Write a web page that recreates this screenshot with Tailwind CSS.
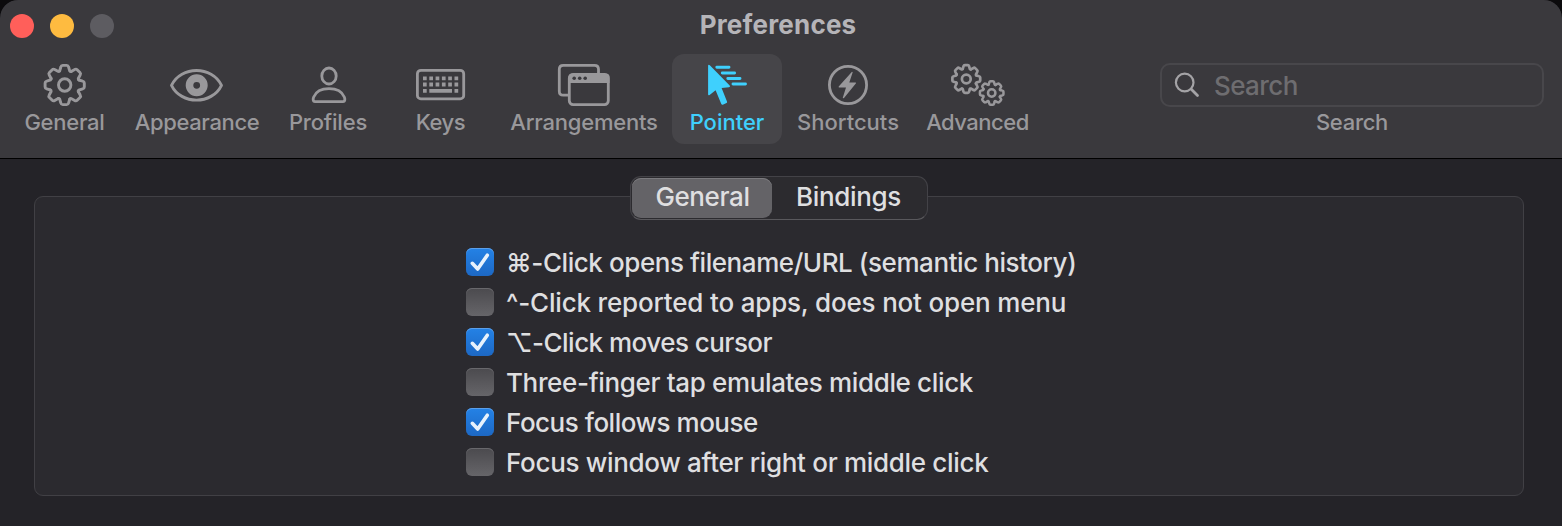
<!DOCTYPE html>
<html lang="en">
<head>
<meta charset="utf-8">
<title>Preferences</title>
<script src="https://cdn.jsdelivr.net/npm/@tailwindcss/browser@4"></script>
</head>
<body class="h-[526px] w-[1562px] overflow-hidden bg-[#0c0b0d] font-['Inter',sans-serif] antialiased">
<svg class="hidden">
  <defs>
    <path id="tooth" d="M-5-14.2L-3.9-18Q-3.5-19.6-2-19.6H2Q3.5-19.6 3.9-18L5-14.2Q5.7-13.2 6.5-13.6" vector-effect="non-scaling-stroke"/>
    <g id="gear" fill="none" stroke="currentColor" stroke-linecap="round">
      <use href="#tooth"/><use href="#tooth" transform="rotate(45)"/><use href="#tooth" transform="rotate(90)"/><use href="#tooth" transform="rotate(135)"/><use href="#tooth" transform="rotate(180)"/><use href="#tooth" transform="rotate(225)"/><use href="#tooth" transform="rotate(270)"/><use href="#tooth" transform="rotate(315)"/>
      <circle r="6.2" vector-effect="non-scaling-stroke"/>
    </g>
  </defs>
</svg>
<div class="flex h-[526px] flex-col overflow-hidden rounded-t-[18px] bg-[#242328]">
  <header class="flex h-[159px] flex-col rounded-t-[18px] border-b border-black bg-[#3a393d]">
    <div class="flex h-[54px] items-center pb-[2px] pl-[10px]">
      <div class="flex w-[460px] gap-4">
        <i class="size-6 rounded-full bg-[#ff5f5a]"></i><i class="size-6 rounded-full bg-[#febb40]"></i><i class="size-6 rounded-full bg-[#5d5c61]"></i>
      </div>
      <h1 class="flex w-[616px] justify-center pb-[2px] text-[26px] leading-8 font-bold tracking-[0.2px] text-[#b5b4b8]">Preferences</h1>
    </div>
    <nav class="flex pl-3 text-[22px] leading-7 font-medium text-[#99989b]">
      <div class="flex w-[105px] flex-col items-center">
        <svg class="h-[54px] w-full" viewBox="12 54 105 54"><use href="#gear" x="64.7" y="85" stroke-width="2.9"/></svg>
        <span class="tracking-[-0.25px]">General</span>
      </div>
      <div class="flex w-[160px] flex-col items-center">
        <svg class="h-[54px] w-full" viewBox="117 54 160 54" fill="none" stroke="currentColor"><path d="M171.500 85.300C181 65.500 212 65.500 221.500 85.300C212 105 181 105 171.500 85.300Z" stroke-width="2.900" stroke-linejoin="round"/><circle cx="196.700" cy="85.300" r="7.200" stroke-width="7.600"/></svg>
        <span class="tracking-[-0.35px]">Appearance</span>
      </div>
      <div class="flex w-[102px] flex-col items-center">
        <svg class="h-[54px] w-full" viewBox="277 54 102 54" fill="none" stroke="currentColor" stroke-width="2.800"><ellipse cx="329" cy="76" rx="7.200" ry="8"/><path d="M315 101.600C312.600 101.600 313 98.600 313.700 97C316 91.500 321.500 88.700 329 88.700S342 91.500 344.300 97C345 98.600 345.400 101.600 343 101.600Z"/></svg>
        <span class="tracking-[-0.2px]">Profiles</span>
      </div>
      <div class="flex w-[122px] flex-col items-center">
        <svg class="h-[54px] w-full" viewBox="379 54 122 54" fill="none" stroke="currentColor"><rect x="417.400" y="70.300" width="46.300" height="28.600" rx="3.500" stroke-width="2.800"/><path d="M423 78.300H459M423 84.500H459" stroke-width="3.800" stroke-dasharray="3.700 2.600"/><path d="M423 90.800H426.700M429.300 90.800H452M454.500 90.800H458.200" stroke-width="3.800"/></svg>
        <span class="pl-[1px] tracking-[-0.4px]">Keys</span>
      </div>
      <div class="mr-[5px] flex w-[166px] flex-col items-center">
        <svg class="h-[54px] w-full" viewBox="501 54 166 54" fill="none" stroke="currentColor"><path d="M568 95.200H563.300Q559.300 95.200 559.300 91.200V69.300Q559.300 65.300 563.300 65.300H594.500Q598.500 65.300 598.500 69.300V73" stroke-width="2.800"/><rect x="569.300" y="74.400" width="39" height="30.200" rx="3.800" stroke-width="2.800"/><path d="M568.500 83V77Q568.500 73.500 572 73.500H606Q609.500 73.500 609.500 77V83Z" fill="currentColor" stroke="none"/><g fill="#3a393d" stroke="none"><circle cx="574.200" cy="78.200" r="1.800"/><circle cx="579.700" cy="78.200" r="1.800"/><circle cx="585.200" cy="78.200" r="1.800"/></g></svg>
        <span class="tracking-[-0.2px]">Arrangements</span>
      </div>
      <div class="flex h-[90px] w-[110px] flex-col items-center rounded-[12px] bg-[#464549] text-[#3fd0fd]">
        <svg class="h-[54px] w-full" viewBox="672 54 110 54" fill="currentColor"><path d="M708.100 65.500Q708.400 64 709.800 65.200L729.700 85.600Q730.800 87 729 87.200L721.600 88L727 101.500Q727.400 102.600 726.500 103L722.800 104.700Q721.800 105 721.300 104L715.600 90.200L709.600 95Q708.100 95.900 708.100 94.200Z"/><path d="M716.800 67.300H729M722.300 73H734.600M727.800 78.500H740M733 84H745.500" stroke="currentColor" stroke-width="2.900" stroke-linecap="round"/></svg>
        <span>Pointer</span>
      </div>
      <div class="flex w-[132px] flex-col items-center">
        <svg class="h-[54px] w-full" viewBox="782 54 132 54" fill="currentColor"><circle cx="848" cy="85" r="18.600" fill="none" stroke="currentColor" stroke-width="2.800"/><path d="M852 71.800L838.700 86.500Q838.300 87.400 839.200 87.400H846L842.700 98L843.800 98.200L856 83.300Q856.400 82.500 855.400 82.500H849.300L852.700 72.200Z"/></svg>
        <span>Shortcuts</span>
      </div>
      <div class="flex w-[127px] flex-col items-center">
        <svg class="h-[54px] w-full" viewBox="914 54 127 54"><g transform="translate(966.300 79) scale(.71)" stroke-width="2.700"><use href="#gear"/></g><g transform="translate(991.700 93) scale(.6)" stroke-width="2.500"><use href="#gear"/></g></svg>
        <span class="tracking-[-0.5px]">Advanced</span>
      </div>
      <div class="ml-[119px] flex w-[384px] flex-col items-center pt-[9px]">
        <div class="mb-[1px] flex h-11 w-full items-center rounded-[10px] border-2 border-[#48474b] pl-[10px] text-[26px] font-normal text-[#6e6d70]">
          <svg class="mr-[2px] h-8 w-[40px]" viewBox="1172 70 40 32" fill="none" stroke="#a4a3a6" stroke-linecap="round"><circle cx="1184.700" cy="83.500" r="8.800" stroke-width="2.200"/><path d="M1191.300 90.300L1197.500 96.500" stroke-width="2.800"/></svg>
          <span class="pt-[2px] font-[450] tracking-[-0.6px]">Search</span>
        </div>
        <span class="tracking-[-0.3px]">Search</span>
      </div>
    </nav>
  </header>
  <main class="pt-[17px] pr-[38px] pl-[34px]">
    <section class="mt-5 flex h-[300px] flex-col items-center rounded-[9px] border-[1.500px] border-[#414045] bg-[#2b2a2f] text-[26px] leading-8 font-[450] text-[#dfdfe0]">
      <div class="mt-[-21px] flex h-11 w-[298px] shrink-0 rounded-[11px] border border-[#434247] border-b-[#59585c] bg-[#2c2b2f] p-[1px]">
        <div class="flex w-[140px] items-center justify-center rounded-[9px] bg-[#646367] pb-[2px] pl-[1px] tracking-[-0.4px] shadow-[inset_0_1px_0_#7b7a7e]">General</div>
        <div class="flex flex-1 items-center justify-center pr-[1px] pb-[2px] tracking-[-0.35px]">Bindings</div>
      </div>
      <div class="mt-[27px] flex w-[626px] flex-col gap-2">
        <label class="flex h-8 items-center gap-3"><svg class="mb-[2px] size-7 rounded-md bg-linear-to-b from-[#2482e6] to-[#1d68c4] shadow-[inset_0_1px_0_#5c9fe9]" viewBox="0 0 28 28" fill="none" stroke="#e8f2fc" stroke-width="3.600" stroke-linecap="round" stroke-linejoin="round"><path d="M6.300 15.300L11.700 21L21.300 7.200"/></svg><span class="tracking-[-0.43px]">⌘-Click opens filename/URL (semantic history)</span></label>
        <label class="flex h-8 items-center gap-3"><i class="mb-[2px] size-7 rounded-md bg-linear-to-b from-[#4b4a4e] to-[#666569] shadow-[inset_0_1px_0_#69686c]"></i><span class="tracking-[-0.18px]">^-Click reported to apps, does not open menu</span></label>
        <label class="flex h-8 items-center gap-3"><svg class="mb-[2px] size-7 rounded-md bg-linear-to-b from-[#2482e6] to-[#1d68c4] shadow-[inset_0_1px_0_#5c9fe9]" viewBox="0 0 28 28" fill="none" stroke="#e8f2fc" stroke-width="3.600" stroke-linecap="round" stroke-linejoin="round"><path d="M6.300 15.300L11.700 21L21.300 7.200"/></svg><span class="tracking-[-0.53px]">⌥-Click moves cursor</span></label>
        <label class="flex h-8 items-center gap-3"><i class="mb-[2px] size-7 rounded-md bg-linear-to-b from-[#4b4a4e] to-[#666569] shadow-[inset_0_1px_0_#69686c]"></i><span class="tracking-[-0.35px]">Three-finger tap emulates middle click</span></label>
        <label class="flex h-8 items-center gap-3"><svg class="mb-[2px] size-7 rounded-md bg-linear-to-b from-[#2482e6] to-[#1d68c4] shadow-[inset_0_1px_0_#5c9fe9]" viewBox="0 0 28 28" fill="none" stroke="#e8f2fc" stroke-width="3.600" stroke-linecap="round" stroke-linejoin="round"><path d="M6.300 15.300L11.700 21L21.300 7.200"/></svg><span class="tracking-[-0.49px]">Focus follows mouse</span></label>
        <label class="flex h-8 items-center gap-3"><i class="mb-[2px] size-7 rounded-md bg-linear-to-b from-[#4b4a4e] to-[#666569] shadow-[inset_0_1px_0_#69686c]"></i><span class="tracking-[-0.32px]">Focus window after right or middle click</span></label>
      </div>
    </section>
  </main>
</div>
</body>
</html>
